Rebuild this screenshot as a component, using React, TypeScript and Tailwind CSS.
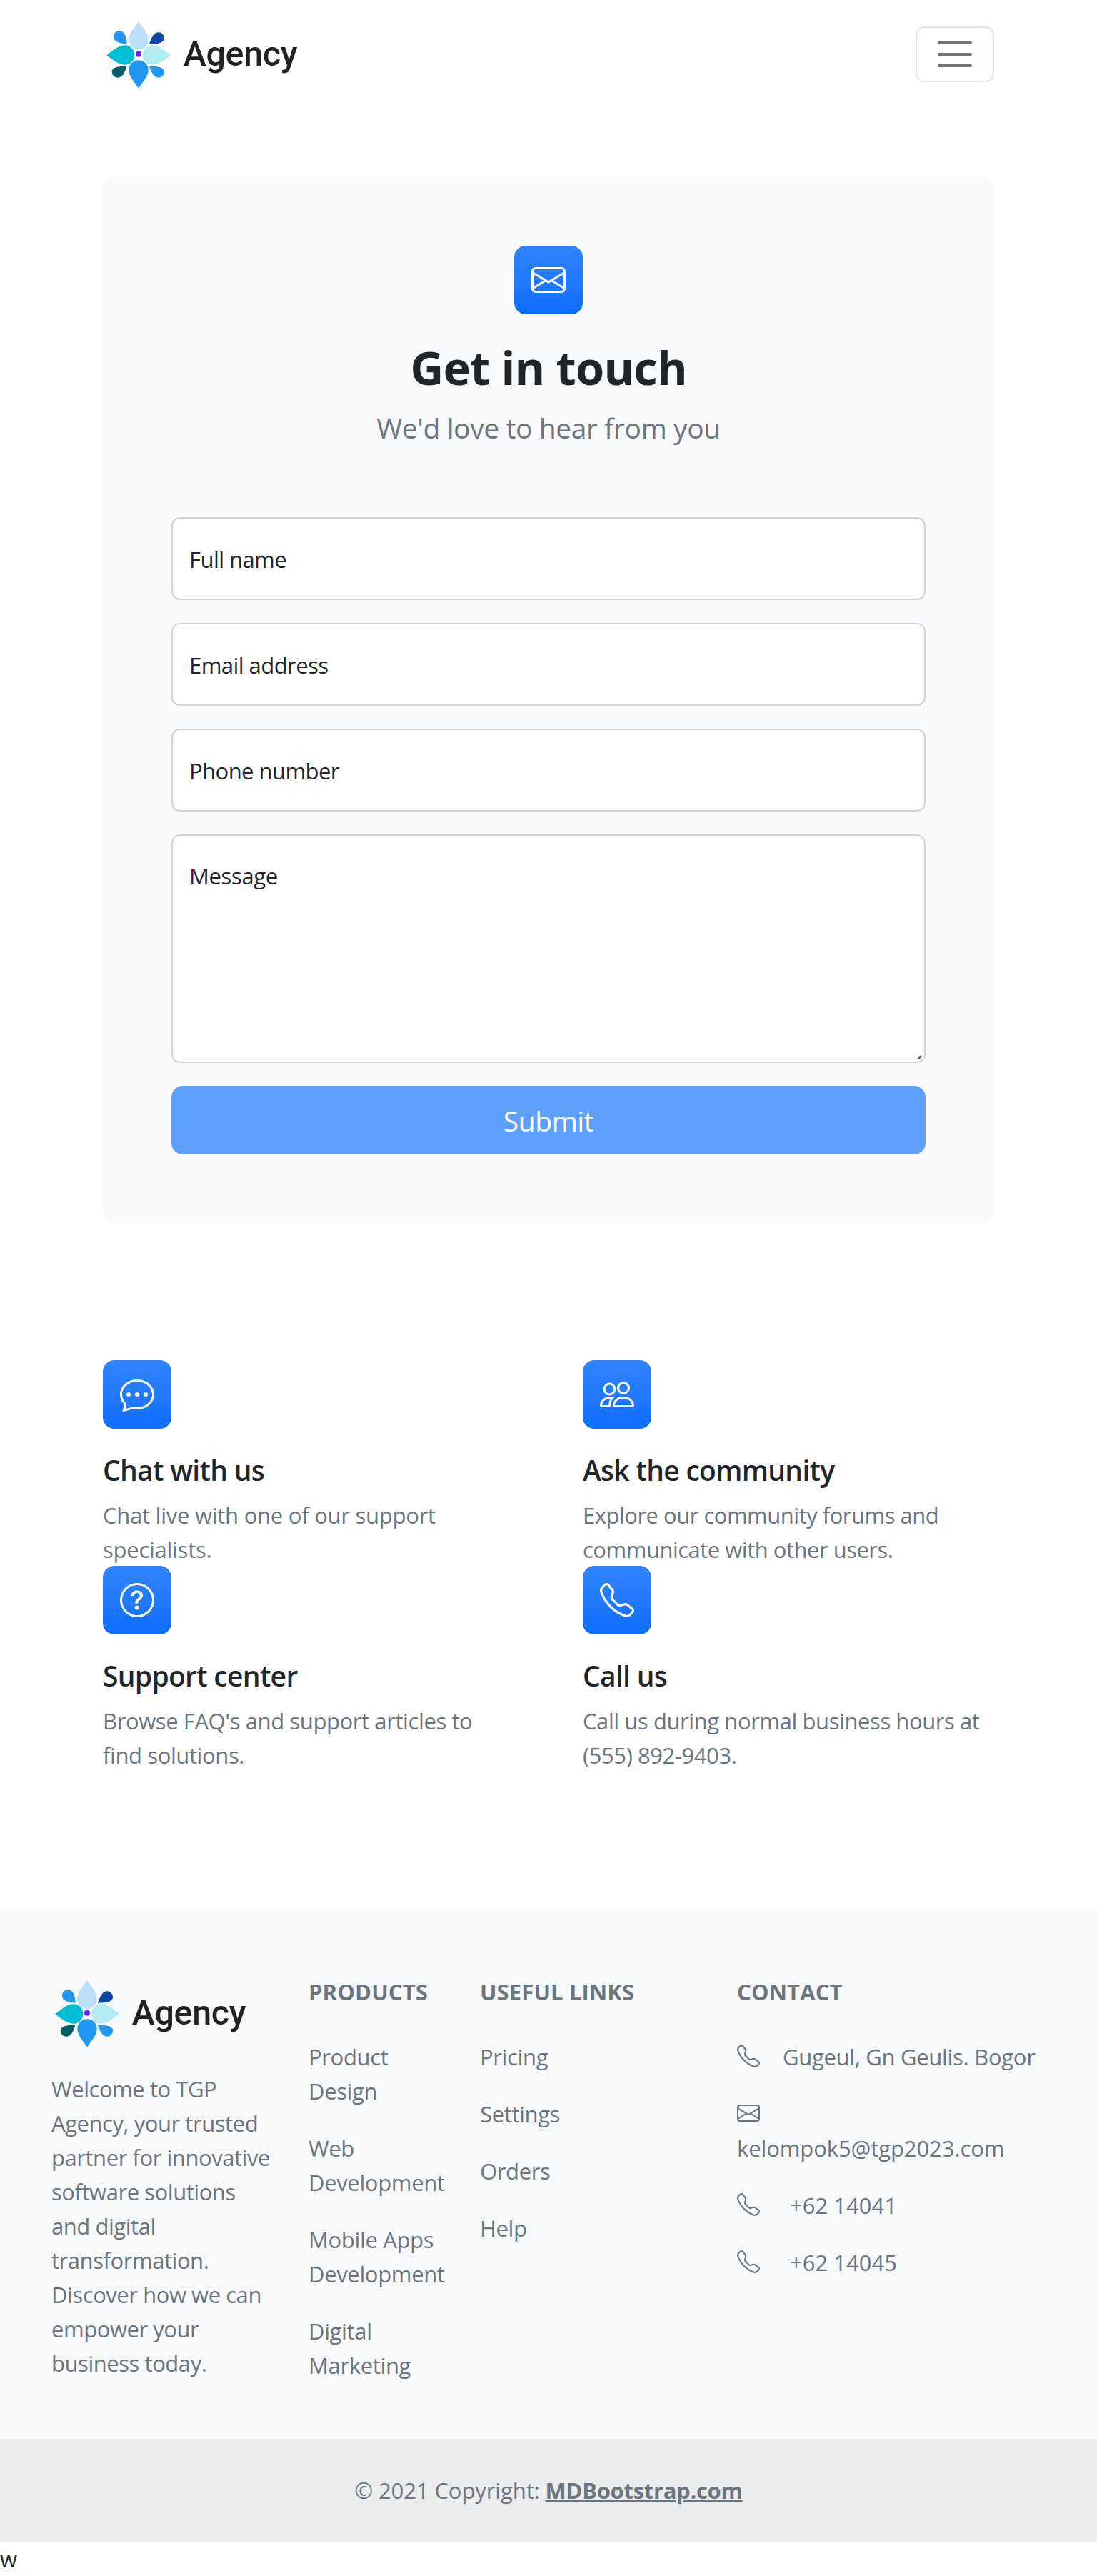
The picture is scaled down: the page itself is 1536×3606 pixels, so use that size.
import type { ReactNode } from 'react';
import {
  BsChatDots,
  BsEnvelope,
  BsPeople,
  BsQuestionCircle,
  BsTelephone,
} from 'react-icons/bs';

function Logo() {
  return (
    <svg viewBox="42 79 840 300" className="block h-[100px] w-[280px]" role="img" aria-label="Agency">
      <path d="M192 90C205 112 233 140 233 169A41 41 0 0 1 151 169C151 140 179 112 192 90Z" fill="#bbdefb" />
      <path d="M192 372C205 350 233 324 233 295A41 41 0 0 0 151 295C151 324 179 350 192 372Z" fill="#2196f3" />
      <path d="M57 233C80 217 107 191 134 191A41 41 0 0 1 134 273C107 273 80 249 57 233Z" fill="#00bcd4" />
      <path d="M328 233C305 217 278 191 251 191A41 41 0 0 0 251 273C278 273 305 249 328 233Z" fill="#b2ebf2" />
      <path d="M143 186C143 168 137 130 111 130A24 24 0 0 0 87 155C87 180 122 184 143 186Z" fill="#2196f3" />
      <path d="M237 186C244 166 254 137 276 137A24 24 0 0 1 300 161C300 186 260 186 237 186Z" fill="#0d47a1" />
      <path d="M142 279C137 296 128 327 104 327A24 24 0 0 1 80 303C80 279 119 279 142 279Z" fill="#006064" />
      <path d="M237 279C243 297 254 327 276 327A24 24 0 0 0 300 303C300 279 260 279 237 279Z" fill="#2196f3" />
      <circle cx="192" cy="228" r="12" fill="#651fff" />
      <text
        x="380"
        y="276"
        fontFamily="Roboto, sans-serif"
        fontSize="145"
        fontWeight="500"
        fill="#212121"
        textLength="479"
      >
        Agency
      </text>
    </svg>
  );
}

function Tile({ children }: { children: ReactNode }) {
  return (
    <div className="flex size-24 items-center justify-center rounded-2xl bg-linear-to-b from-[#3184fd] to-[#0d6efd] text-5xl text-white">
      {children}
    </div>
  );
}

function Field({ label }: { label: string }) {
  return (
    <div className="flex h-[116px] items-center rounded-xl border-2 border-[#ced4da] bg-white px-[23px] pt-px tracking-[-0.55px]">
      <label>{label}</label>
    </div>
  );
}

function Feature({ icon, title, children }: { icon: ReactNode; title: string; children: ReactNode }) {
  return (
    <div className="h-72">
      <Tile>{icon}</Tile>
      <h2 className="mt-[34px] mb-[15px] text-[39px] leading-[48px] font-semibold tracking-[-0.7px]">{title}</h2>
      <p>{children}</p>
    </div>
  );
}

function FooterHeading({ children }: { children: ReactNode }) {
  return <h6 className="mt-px mb-[47px] leading-[38.4px] font-bold tracking-[0.15px] uppercase">{children}</h6>;
}

export default function App() {
  return (
    <div className="h-[3606px] w-[1536px] overflow-hidden bg-white font-['Open_Sans',sans-serif] text-[31px] leading-[48px] tracking-[-0.35px] text-[#212529]">
      <nav className="flex h-[152px] items-center justify-between px-36">
        <Logo />
        <button className="flex h-[78px] w-[110px] items-center justify-center rounded-xl border-2 border-black/10">
          <svg viewBox="0 0 30 30" className="size-[60px]" fill="none" stroke="#000" strokeOpacity="0.55" strokeWidth="2" strokeLinecap="round">
            <path d="M4 7h22M4 15h22M4 23h22" />
          </svg>
        </button>
      </nav>

      <main className="px-36 pt-24">
        <section className="rounded-2xl bg-[#f8f9fa] p-24">
          <div className="flex flex-col items-center">
            <Tile>
              <BsEnvelope />
            </Tile>
            <h1 className="mt-[34px] mb-[15px] text-[65px] leading-[80.45px] font-bold tracking-[-0.8px]">Get in touch</h1>
            <p className="mb-[95px] text-[39px] leading-[60px] tracking-[-0.4px] text-[#6c757d]">We'd love to hear from you</p>
          </div>
          <form className="flex flex-col gap-8">
            <Field label="Full name" />
            <Field label="Email address" />
            <Field label="Phone number" />
            <div className="relative h-80 rounded-xl border-2 border-[#ced4da] bg-white px-[23px] py-8">
              <label>Message</label>
              <svg viewBox="0 0 6 6" className="absolute right-[3px] bottom-[3px] size-1.5">
                <path d="M1.8 4.2 4 2" stroke="#55585b" strokeWidth="3" strokeLinecap="round" />
              </svg>
            </div>
            <button type="button" className="h-24 rounded-2xl bg-[#5f9ffc] pt-0.5 text-[39px] leading-[60px] tracking-[-0.4px] text-white">
              Submit
            </button>
          </form>
        </section>

        <section className="grid grid-cols-2 gap-x-24 py-48">
          <Feature icon={<BsChatDots />} title="Chat with us">
            <span className="tracking-[-0.25px] text-[#6c757d]">Chat live with one of our support specialists.</span>
          </Feature>
          <Feature icon={<BsPeople />} title="Ask the community">
            <span className="tracking-[-0.5px] text-[#6c757d]">
              Explore our community forums and communicate with other users.
            </span>
          </Feature>
          <Feature icon={<BsQuestionCircle />} title="Support center">
            <span className="tracking-[-0.4px] text-[#6c757d]">Browse FAQ's and support articles to find solutions.</span>
          </Feature>
          <Feature icon={<BsTelephone />} title="Call us">
            <span className="tracking-[-0.42px] text-[#6c757d]">Call us during normal business hours at (555) 892-9403.</span>
          </Feature>
        </section>
      </main>

      <footer className="bg-[#f8f9fa] text-[#6c757d]">
        <div className="flex h-[741.8px] px-[72px] pt-24">
          <div className="w-[360px] pr-12">
            <Logo />
            <p className="mt-8 tracking-[-0.45px]">
              Welcome to TGP Agency, your trusted partner for innovative software solutions and digital transformation.
              Discover how we can empower your business today.
            </p>
          </div>
          <div className="w-60 pr-12">
            <FooterHeading>Products</FooterHeading>
            <div className="flex flex-col gap-8">
              <a>Product Design</a>
              <a>Web Development</a>
              <a>Mobile Apps Development</a>
              <a>Digital Marketing</a>
            </div>
          </div>
          <div className="w-[360px]">
            <FooterHeading>Useful links</FooterHeading>
            <div className="flex flex-col gap-8">
              <a>Pricing</a>
              <a>Settings</a>
              <a>Orders</a>
              <a>Help</a>
            </div>
          </div>
          <div className="flex-1">
            <FooterHeading>Contact</FooterHeading>
            <div className="flex flex-col gap-8">
              <p className="flex tracking-[-0.3px]">
                <BsTelephone className="mt-[7px] mr-8 size-8" />
                Gugeul, Gn Geulis. Bogor
              </p>
              <p className="tracking-[-0.1px]">
                <BsEnvelope className="mt-[7px] mb-[9px] size-8" />
                kelompok5@tgp2023.com
              </p>
              <p className="flex tracking-normal">
                <BsTelephone className="mt-[7px] mr-[42px] size-8" />
                +62 14041
              </p>
              <p className="flex tracking-normal">
                <BsTelephone className="mt-[7px] mr-[42px] size-8" />
                +62 14045
              </p>
            </div>
          </div>
        </div>
        <div className="bg-black/5 p-12 text-center tracking-[-0.1px]">
          © 2021 Copyright: <a className="font-bold tracking-[-0.3px] underline">MDBootstrap.com</a>
        </div>
      </footer>
      <p>w</p>
    </div>
  );
}
